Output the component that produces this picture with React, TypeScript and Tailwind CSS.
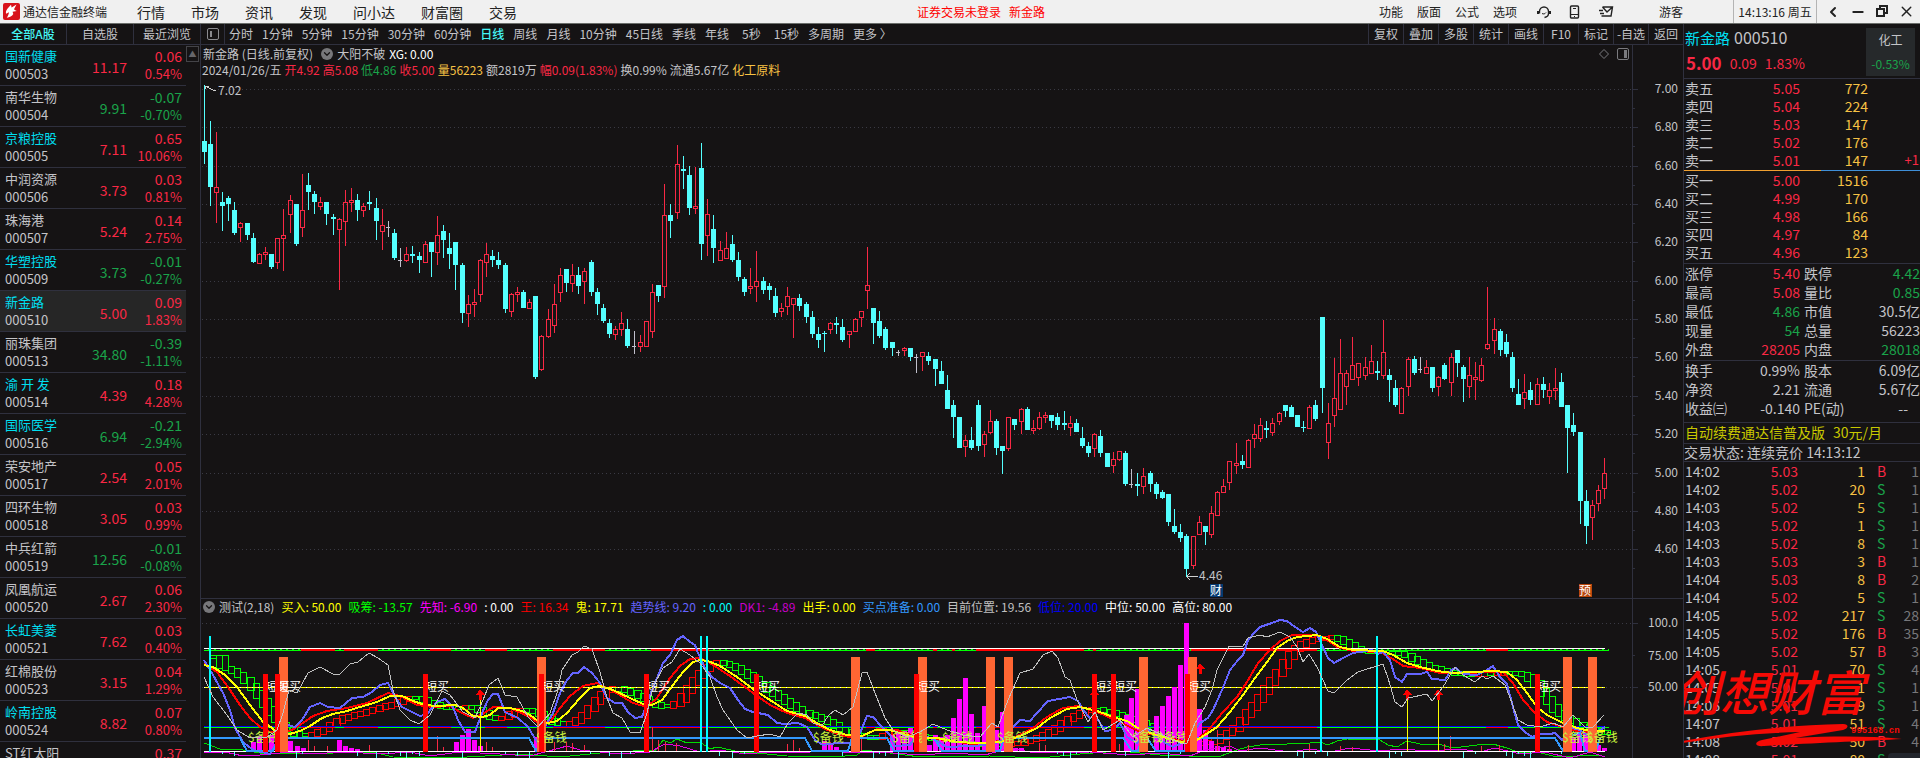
import React from "react";
import { ChevronDown, ChevronLeft, Copy, Headset, Minus, Smartphone, X } from "lucide-react";
import clsx from "clsx";

const UP = "text-[#f92844]";
const DOWN = "text-[#1aa34a]";
const GOLD = "text-[#f7c244]";
const CYAN = "text-[#00dff0]";

const menus = ["行情", "市场", "资讯", "发现", "问小达", "财富圈", "交易"];
const rightMenus = ["功能", "版面", "公式", "选项"];
const periods = [
  "分时", "1分钟", "5分钟", "15分钟", "30分钟", "60分钟", "日线", "周线", "月线",
  "10分钟", "45日线", "季线", "年线", "5秒", "15秒", "多周期", "更多 〉",
];
const tools = ["复权", "叠加", "多股", "统计", "画线", "F10", "标记", "-自选", "返回"];

type Stock = { name: string; code: string; price: string; diff: string; pct: string; hot?: boolean };

const stocks: Stock[] = [
  { name: "国新健康", code: "000503", price: "11.17", diff: "0.06", pct: "0.54%", hot: true },
  { name: "南华生物", code: "000504", price: "9.91", diff: "-0.07", pct: "-0.70%" },
  { name: "京粮控股", code: "000505", price: "7.11", diff: "0.65", pct: "10.06%", hot: true },
  { name: "中润资源", code: "000506", price: "3.73", diff: "0.03", pct: "0.81%" },
  { name: "珠海港", code: "000507", price: "5.24", diff: "0.14", pct: "2.75%" },
  { name: "华塑控股", code: "000509", price: "3.73", diff: "-0.01", pct: "-0.27%", hot: true },
  { name: "新金路", code: "000510", price: "5.00", diff: "0.09", pct: "1.83%", hot: true },
  { name: "丽珠集团", code: "000513", price: "34.80", diff: "-0.39", pct: "-1.11%" },
  { name: "渝 开 发", code: "000514", price: "4.39", diff: "0.18", pct: "4.28%", hot: true },
  { name: "国际医学", code: "000516", price: "6.94", diff: "-0.21", pct: "-2.94%", hot: true },
  { name: "荣安地产", code: "000517", price: "2.54", diff: "0.05", pct: "2.01%" },
  { name: "四环生物", code: "000518", price: "3.05", diff: "0.03", pct: "0.99%" },
  { name: "中兵红箭", code: "000519", price: "12.56", diff: "-0.01", pct: "-0.08%" },
  { name: "凤凰航运", code: "000520", price: "2.67", diff: "0.06", pct: "2.30%" },
  { name: "长虹美菱", code: "000521", price: "7.62", diff: "0.03", pct: "0.40%", hot: true },
  { name: "红棉股份", code: "000523", price: "3.15", diff: "0.04", pct: "1.29%" },
  { name: "岭南控股", code: "000524", price: "8.82", diff: "0.07", pct: "0.80%", hot: true },
  { name: "ST红太阳", code: "000525", price: "7.40", diff: "0.37", pct: "5.26%" },
];

const quoteLine: [string, string][] = [
  ["2024/01/26/五", "text-[#c4c4c8]"],
  ["开4.92", UP],
  ["高5.08", UP],
  ["低4.86", DOWN],
  ["收5.00", UP],
  ["量56223", GOLD],
  ["额2819万", "text-[#c4c4c8]"],
  ["幅0.09(1.83%)", UP],
  ["换0.99%", "text-[#c4c4c8]"],
  ["流通5.67亿", "text-[#c4c4c8]"],
  ["化工原料", GOLD],
];

const legend: [string, string][] = [
  ["测试(2,18)", "text-[#c4c4c8]"],
  ["买入: 50.00", "text-[#ffff00]"],
  ["吸筹: -13.57", "text-[#00ff00]"],
  ["先知: -6.90", "text-[#ff00ff]"],
  [": 0.00", "text-white"],
  ["王: 16.34", "text-[#ff0000]"],
  ["鬼: 17.71", "text-[#ffff00]"],
  ["趋势线: 9.20", "text-[#6464ff]"],
  [": 0.00", "text-[#00ffff]"],
  ["DK1: -4.89", "text-[#c800c8]"],
  ["出手: 0.00", "text-[#ffff00]"],
  ["买点准备: 0.00", "text-[#3399ff]"],
  ["目前位置: 19.56", "text-[#c0c0c0]"],
  ["低位: 20.00", "text-[#0000ff]"],
  ["中位: 50.00", "text-white"],
  ["高位: 80.00", "text-white"],
];

const sells = [["卖五", "5.05", "772"], ["卖四", "5.04", "224"], ["卖三", "5.03", "147"], ["卖二", "5.02", "176"], ["卖一", "5.01", "147", "+1"]];
const buys = [["买一", "5.00", "1516"], ["买二", "4.99", "170"], ["买三", "4.98", "166"], ["买四", "4.97", "84"], ["买五", "4.96", "123"]];

const W = "text-[#c4c4c8]";
const stats = [
  ["涨停", "5.40", UP, "跌停", "4.42", DOWN],
  ["最高", "5.08", UP, "量比", "0.85", DOWN],
  ["最低", "4.86", DOWN, "市值", "30.5亿", W],
  ["现量", "54", DOWN, "总量", "56223", W],
  ["外盘", "28205", UP, "内盘", "28018", DOWN],
];
const stats2 = [
  ["换手", "0.99%", W, "股本", "6.09亿", W],
  ["净资", "2.21", W, "流通", "5.67亿", W],
  ["收益㈢", "-0.140", W, "PE(动)", "--", W],
];

const ticks = [
  "14:02 5.03 1 B 1", "14:02 5.02 20 S 1", "14:03 5.02 5 S 1", "14:03 5.02 1 S 1",
  "14:03 5.02 8 S 1", "14:03 5.03 3 B 1", "14:04 5.03 8 B 2", "14:04 5.02 5 S 1",
  "14:05 5.02 217 S 28", "14:05 5.02 176 B 35", "14:05 5.02 57 B 3", "14:05 5.01 70 S 4",
  "14:05 5.01 1 S 1", "14:06 5.01 9 S 1", "14:07 5.01 51 S 4", "14:08 5.02 50 B 4",
  "14:08 5.01 80 S 2",
].map((t) => t.split(" "));

// kind, high, body top, body bottom, low
const candles = `d85,141,152,164 d121,144,187,206 u132,187,193,223 d192,202,206,231 d196,198,204,221 d202,210,233,235 u222,223,228,242
d223,223,235,240 d233,238,262,263 u253,254,264,264 u247,252,255,260 d254,254,267,269 u238,238,263,269 u209,235,239,271
u195,200,215,233 d204,204,244,246 u174,210,228,237 d173,185,192,210 d191,194,202,214 u197,202,207,210 d202,202,214,225
d214,217,219,235 u218,219,230,290 u190,202,222,246 u188,200,203,212 d194,200,210,221 u203,206,211,217 d191,202,204,210
d198,208,221,240 u209,225,232,250 n221,227,228,237 d229,233,258,260 n248,260,261,267 u247,254,261,262 d246,254,256,263
d252,256,260,273 u241,244,263,263 d242,242,252,277 u216,235,253,265 d225,231,240,258 d233,248,254,269 d242,242,265,290
d263,265,313,323 u295,304,314,327 u289,302,305,317 u259,260,295,302 u243,254,263,277 d250,256,260,267 d252,260,265,269
d263,265,309,313 u293,294,312,317 u287,292,295,302 d290,292,308,308 u299,302,309,309 d296,296,377,379 u335,336,370,371
u309,319,337,338 u284,304,326,333 u268,275,293,302 d269,269,283,292 u264,275,284,292 d267,275,286,294 u268,271,282,304
d260,262,292,296 d288,292,304,315 d304,308,321,323 d319,323,334,338 u326,329,335,340 u312,323,330,336 d319,329,346,348
n331,346,347,354 u335,342,347,352 u321,321,347,347 u284,292,332,338 d285,285,296,302 u184,215,287,298 d204,215,221,238
u145,164,213,219 d156,169,171,189 d166,175,208,215 u167,206,209,214 d143,168,244,260 u199,214,236,256 d215,229,248,263
u241,250,261,261 u232,248,259,259 d235,244,260,262 d252,260,277,281 d277,279,292,296 u268,286,289,294 u251,281,287,302
d277,281,290,294 d283,286,290,300 d288,296,313,317 u303,308,312,317 u287,296,307,315 u298,298,305,338 d294,298,306,311
d302,304,317,323 d311,317,334,338 d327,334,340,348 d331,333,334,352 u322,323,330,334 d317,323,325,334 d319,327,340,342
u331,331,335,348 u318,319,332,332 u311,311,318,327 u247,285,291,309 d308,308,323,344 d311,321,336,338 d327,329,348,350
d342,342,348,356 n350,352,353,356 u347,348,351,356 d348,348,357,361 n354,357,358,373 u352,352,357,371 d352,356,361,365
d359,359,369,386 d361,371,384,384 d375,390,409,409 d400,405,417,438 d417,417,448,448 u435,440,447,457 d427,440,448,450
d400,405,446,451 u431,434,445,457 u410,421,433,434 d419,421,448,455 d446,446,451,474 u417,417,449,451 d419,419,425,430
u408,409,422,434 d407,409,430,430 u420,428,431,434 u412,417,429,430 u412,415,418,423 d415,415,421,428 d413,417,425,430
d411,423,425,430 u416,423,428,436 d419,423,432,432 d427,438,446,448 d442,446,453,457 u433,434,449,457 d430,436,453,457
d453,453,467,467 u452,459,466,473 u451,451,460,461 d451,453,484,486 n469,484,485,488 d473,484,486,496 u468,476,487,494
d471,473,484,492 d482,484,494,499 d490,492,498,499 d494,494,522,526 d509,526,532,534 d524,532,538,542 d534,536,569,577
u536,536,566,569 u516,522,535,535 d526,526,532,545 u506,513,535,538 u491,492,516,516 u479,486,493,493 u461,461,483,490
u443,463,466,474 d455,461,465,469 u439,440,468,468 u424,434,439,448 u418,425,439,442 d421,428,430,438 u418,423,433,436
u412,413,422,425 d405,405,411,417 d405,407,417,417 d415,415,427,427 d421,427,428,432 u405,407,429,429 d400,405,419,421
d317,317,388,413 u403,423,443,459 u358,398,416,427 u339,373,410,410 u370,373,387,405 u337,365,380,380 u363,363,378,386
u357,367,376,380 u345,361,374,374 d361,371,373,380 u320,352,376,379 d369,375,380,402 d380,388,405,407 u387,388,414,414
u357,359,387,396 d356,359,373,375 n357,369,370,373 u360,367,374,374 d367,367,388,392 u376,377,387,396 d363,365,379,380
u353,357,383,396 d350,350,363,377 d365,367,379,402 u357,375,387,398 u362,377,380,400 u358,365,381,382 u287,344,349,350
u318,329,341,354 d329,331,350,356 d334,342,354,357 d352,357,388,392 d379,394,405,405 u374,392,399,409 d382,390,400,405
u378,384,405,405 d377,384,390,398 u383,390,397,404 u368,388,391,400 d373,382,407,407 d405,405,428,473 d413,425,432,436
d432,432,501,524 d490,501,526,544 u500,505,518,540 u485,490,504,511 u458,473,489,499`
  .split(/\s+/)
  .map((s, i) => {
    const [high, top, bottom, low] = s.slice(1).split(",").map(Number);
    return { kind: s[0], x: 204 + 6 * i + Math.floor(i / 7), high, top, bottom, low };
  });

const priceAxis: [string, number][] = [
  ["7.00", 89], ["6.80", 127], ["6.60", 166], ["6.40", 204], ["6.20", 242], ["6.00", 281], ["5.80", 319],
  ["5.60", 357], ["5.40", 396], ["5.20", 434], ["5.00", 473], ["4.80", 511], ["4.60", 549],
];

const yellowLine =
  "204,665 213,667 225,675 237,687 250,705 263,722 272,728 278,733 290,734 300,731 310,726 322,718 333,714 347,711 360,707 377,702 390,696 402,696 413,701 425,705 437,706 455,705 463,708 473,716 482,717 490,715 498,708 510,708 522,711 530,715 538,721 548,723 557,721 567,713 580,698 590,688 600,686 613,690 630,698 643,704 652,705 662,700 673,685 683,672 693,662 700,660 708,661 720,666 737,677 753,689 770,700 787,711 805,716 817,723 830,730 847,735 862,736 875,730 890,730 903,734 914,737 937,738 957,742 977,743 1000,742 1018,737 1037,728 1050,718 1067,709 1080,707 1097,711 1113,717 1127,721 1138,728 1153,734 1170,739 1180,742 1197,740 1205,735 1217,727 1230,712 1243,695 1255,678 1267,662 1277,648 1287,641 1297,637 1317,635 1327,639 1340,647 1353,650 1383,651 1393,655 1407,663 1420,667 1437,671 1453,673 1473,672 1493,671 1507,672 1517,680 1527,693 1537,707 1547,715 1563,723 1577,728 1590,731 1605,731";
const redLine =
  "204,664 217,672 230,690 240,705 250,718 260,727 270,732 280,733 292,730 300,725 313,716 327,711 347,708 367,703 388,693 400,696 417,705 433,707 450,706 460,712 473,718 483,714 493,707 510,708 530,717 538,723 550,722 560,708 570,696 583,686 597,683 613,691 633,703 647,707 657,698 670,678 680,666 690,659 700,658 710,663 730,676 753,693 770,705 787,713 805,718 823,728 840,735 850,737 863,736 877,729 897,730 917,737 937,739 973,744 1010,740 1033,728 1047,717 1063,708 1078,706 1097,712 1120,722 1140,732 1157,735 1187,742 1197,740 1210,728 1223,712 1237,697 1247,682 1258,663 1270,650 1280,641 1292,635 1313,635 1327,640 1337,647 1353,651 1380,652 1393,659 1403,666 1420,668 1440,673 1467,673 1487,672 1503,672 1513,683 1523,700 1535,713 1547,722 1563,727 1580,732 1605,731";
const trendLine =
  "204,660 213,675 223,693 230,710 235,728 243,742 253,750 270,754 280,737 288,725 295,727 302,720 310,707 320,703 328,707 340,708 352,698 363,697 372,692 380,685 388,683 395,697 402,707 412,712 420,716 427,714 437,702 445,699 453,707 458,720 465,732 475,732 482,713 488,700 493,694 498,694 505,712 518,718 528,727 537,742 543,730 553,713 560,693 567,680 573,673 578,673 584,667 592,673 600,683 607,698 615,703 622,703 628,712 635,718 642,717 648,700 655,683 663,663 670,655 677,640 683,636 690,642 695,645 698,653 705,668 712,677 720,683 730,688 738,700 745,709 753,712 768,715 777,723 785,724 798,723 807,727 815,740 823,745 837,743 850,743 860,733 867,716 873,717 882,727 890,735 895,746 910,745 918,733 935,740 947,747 990,745 1003,740 1010,730 1020,720 1030,721 1037,713 1048,701 1070,697 1078,701 1083,710 1090,718 1095,715 1105,731 1113,730 1120,723 1127,737 1137,743 1148,730 1160,740 1173,747 1188,740 1200,723 1208,718 1213,710 1222,690 1230,670 1238,660 1243,655 1248,640 1255,632 1260,627 1272,623 1280,620 1287,621 1295,627 1303,632 1310,628 1316,632 1322,645 1328,658 1334,663 1343,658 1353,653 1372,650 1378,654 1383,652 1390,660 1395,677 1402,682 1407,674 1420,674 1427,672 1432,679 1445,680 1451,670 1456,668 1463,674 1477,675 1487,670 1493,666 1500,677 1507,684 1513,707 1518,725 1525,732 1532,737 1540,734 1550,734 1555,733 1562,740 1572,728 1580,730 1590,737 1605,727";
const greyLine =
  "204,677 213,697 227,715 237,730 250,738 267,737 277,730 283,713 289,690 297,693 308,673 320,667 333,674 340,674 350,664 358,662 369,653 378,658 388,665 393,690 400,710 410,720 419,724 430,715 442,691 450,695 463,712 475,718 483,700 489,685 498,678 505,695 517,697 528,717 538,727 550,713 557,693 562,670 572,655 578,652 584,646 592,649 600,672 607,698 613,713 622,718 630,732 640,733 647,713 653,687 663,668 672,662 680,649 690,655 700,663 710,677 717,697 723,710 737,730 747,738 757,736 770,734 780,737 788,723 798,713 807,715 813,723 822,726 828,716 835,710 843,715 853,707 862,673 867,672 875,693 885,718 893,730 907,737 920,732 933,724 947,730 963,735 980,737 992,723 998,727 1008,700 1020,673 1033,669 1043,655 1052,651 1058,658 1065,677 1070,680 1077,700 1088,722 1095,712 1103,730 1120,720 1133,737 1147,728 1167,737 1180,743 1187,743 1195,723 1205,707 1212,690 1217,670 1229,646 1243,646 1248,638 1260,635 1267,637 1280,632 1290,637 1297,647 1303,662 1309,654 1317,667 1323,680 1328,691 1334,693 1347,680 1358,672 1383,664 1388,678 1395,702 1402,707 1408,698 1427,694 1432,701 1443,687 1455,667 1463,675 1475,682 1482,676 1487,679 1493,676 1505,685 1512,703 1518,720 1527,725 1540,727 1553,723 1563,727 1573,715 1585,727 1593,727 1604,715";
const readyLine =
  "204,738 240,738 247,751 273,751 280,738 529,738 536,751 543,738 805,738 812,751 848,751 852,738 887,738 894,751 914,751 920,738 934,738 942,751 1000,751 1004,738 1123,738 1132,751 1138,751 1142,738 1147,738 1156,751 1186,751 1192,738 1555,738 1563,751 1572,735 1580,733 1585,751 1596,751 1600,738";
const greenWave =
  "204,743 220,749 243,750 260,753 333,753 350,752 373,752 393,757 450,758 520,754 560,757 610,752 656,750 663,740 670,743 677,739 687,743 700,742 710,749 717,747 740,752 757,753 787,756 833,757 857,755 863,750 872,751 890,753 920,757 990,756 1040,758 1080,754 1120,751 1160,755 1218,757 1237,750 1247,747 1267,744 1287,744 1297,743 1310,743 1320,742 1328,745 1337,741 1347,739 1380,740 1388,745 1397,747 1407,741 1420,744 1438,744 1453,748 1477,745 1493,744 1507,748 1520,753 1537,752 1557,757 1600,755";
const purpleWave =
  "204,753 225,752 243,756 260,755 290,752 310,754 345,752 380,754 410,752 430,756 460,752 500,754 530,756 560,748 567,746 580,750 620,754 650,752 665,744 680,746 700,752 720,750 745,754 770,752 800,753 830,750 850,753 880,752 920,755 950,753 985,755 1010,748 1030,752 1050,753 1090,752 1130,755 1160,753 1190,756 1205,750 1230,746 1240,751 1260,748 1290,752 1310,749 1330,752 1350,748 1380,751 1400,749 1430,751 1460,749 1480,752 1495,748 1520,754 1545,752 1570,758 1590,752 1605,757";

const toPoints = (s: string) => s.split(" ").map((p) => p.split(",").map(Number));
const yellowPts = toPoints(yellowLine);

const valueAt = (x: number) => {
  const i = yellowPts.findIndex((p) => p[0] >= x);
  if (i <= 0) return i === 0 ? yellowPts[0][1] - 10 : yellowPts[yellowPts.length - 1][1];
  const [x0, y0] = yellowPts[i - 1];
  const [x1, y1] = yellowPts[i];
  return y0 + ((y1 - y0) * (x - x0)) / (x1 - x0);
};

// stair boxes trail behind the slow line
const stairs = candles.slice(1).map(({ x }, i) => {
  const a = Math.round(valueAt(x - 20));
  const b = Math.round(valueAt(x - 10));
  return { x, w: x - candles[i].x, y: Math.min(a, b), h: Math.abs(b - a) + 3, color: b >= a ? "#00ff00" : "#ff0000" };
});

const stripStops = [204, 301, 335, 344, 378, 430, 451, 485, 507, 553, 605, 651, 709, 866, 875, 933, 937, 952, 955, 976, 1084, 1093, 1096, 1191, 1317, 1486, 1508, 1609];
const redBars = [265, 277, 425, 541, 646, 756, 916, 1094, 1113, 1187, 1537];
const orangeBars = [279, 537, 851, 918, 986, 1004, 1139, 1188, 1563, 1588];
const cyanBars = [210, 701, 707, 1321, 1377];
const magentaBars: [number, number][] = [
  [253, 742], [259, 736], [271, 735], [290, 741], [297, 746], [303, 748], [339, 740], [345, 746], [351, 748], [357, 749],
  [456, 742], [462, 735], [468, 729], [474, 740], [480, 746], [536, 737], [824, 741], [830, 745], [836, 747], [892, 735],
  [898, 730], [904, 731], [910, 728], [929, 745], [935, 735], [941, 737], [947, 735], [953, 718], [959, 699], [965, 678],
  [971, 714], [977, 733], [984, 706], [996, 730], [1002, 712], [1015, 748], [1021, 748], [1126, 715], [1131, 698],
  [1137, 689], [1156, 716], [1162, 706], [1168, 696], [1174, 687], [1180, 665], [1186, 623], [1199, 709], [1205, 730],
  [1211, 741], [1217, 746], [1223, 747], [1229, 749], [1573, 737], [1579, 731], [1585, 733], [1598, 745], [1604, 748],
];
const spikes: [number, number][] = [
  [308, 740], [314, 746], [327, 746], [369, 745], [437, 736], [443, 747], [486, 742], [492, 747], [554, 742], [566, 742],
  [572, 743], [584, 745], [652, 727], [658, 740], [665, 742], [676, 743], [787, 744], [793, 740], [799, 748], [830, 742],
  [861, 738], [1039, 743], [1045, 745], [1119, 744], [1217, 730], [1229, 741], [1248, 745], [1309, 744], [1340, 746],
  [1352, 747], [1444, 744], [1450, 736], [1481, 746], [1499, 745],
];
const dips = [222, 234, 296, 302, 357, 376, 388, 400, 406, 412, 419, 462, 505, 517, 529, 590, 609, 621, 630, 719, 732, 744, 842, 873, 879, 885, 898, 1057, 1063, 1070, 1076, 1125, 1168, 1180, 1297, 1303, 1315, 1327, 1389, 1395, 1401, 1463, 1475, 1506, 1512, 1518, 1524, 1530, 1561];
const reserveMarks = [248, 536, 813, 892, 942, 997, 1132, 1157, 1562, 1587];
const arrows: [number, number][] = [[480, 689], [1094, 689], [1200, 663], [1407, 689], [1438, 689]];

const Disc = () => (
  <span className="flex size-3 items-center justify-center rounded-full bg-[#77777a] text-[#151314]">
    <ChevronDown size={10} strokeWidth={3} />
  </span>
);

const TopBar = () => (
  <header className="flex h-6 shrink-0 items-center border-b border-[#6a6d6a] bg-[#f0f0f0] text-[#222]">
    <svg width="17" height="17" viewBox="0 0 17 17" className="ml-[3px]">
      <rect width="17" height="17" rx="2" fill="#d8121a" />
      <path d="M13.5 1.5 8.6 4.4 8 1.8 4.6 5.6C3 7.500 2.600 9.300 3.100 10.800L6 9.200C5.500 11.600 5 13.100 3.800 14.800c2.900-.3 5.300-1.600 6.500-3.700L9.600 8.800l4.200-.8c-1.200-.6-2-1-2.800-1.700z" fill="#fff" />
    </svg>
    <h1 className="ml-[3px] text-xs">通达信金融终端</h1>
    <nav className="ml-[30px] flex gap-[26px] text-sm">
      {menus.map((m) => (
        <button key={m}>{m}</button>
      ))}
    </nav>
    <p className="mx-auto flex gap-2 pl-[66px] text-xs text-[#ff0000]">
      <span>证券交易未登录</span>
      <span>新金路</span>
    </p>
    <nav className="flex gap-[14px] text-xs">
      {rightMenus.map((m) => (
        <button key={m}>{m}</button>
      ))}
    </nav>
    <div className="ml-5 flex items-center gap-4">
      <button aria-label="客服">
        <svg width="14" height="14" viewBox="0 0 14 14" fill="none" stroke="currentColor">
          <path d="M2.500 8.500v-2a4.500 4.500 0 0 1 9 0v2c0 2-1.500 3.500-4 4" strokeWidth="1.400" />
          <path d="M1 6v3M13 6v3" strokeWidth="2" />
          <path d="M5 8.500c1.500.8 3 .5 4-1" />
        </svg>
      </button>
      <button aria-label="手机">
        <svg width="14" height="14" viewBox="0 0 14 14" fill="none" stroke="currentColor">
          <rect x="3.500" y="1" width="8" height="12" rx="1" strokeWidth="1.400" />
          <path d="M6 3.500h3M4 9.500h7M7 11.500h1" />
        </svg>
      </button>
      <button aria-label="邮件">
        <svg width="18" height="12" viewBox="0 0 16 12" fill="none" stroke="currentColor" strokeWidth="1.400">
          <path d="M4.500 1h10l-1.500 9H3.500M4.500 1l4.500 5 5.500-5M1 4.500h4M2 7.500h4" />
        </svg>
      </button>
    </div>
    <button className="ml-11 text-xs">游客</button>
    <time className="ml-[50px] flex h-full w-[84px] items-center justify-center border-x border-[#b4b4b4] text-xs">
      14:13:16 周五
    </time>
    <div className="flex items-center gap-[9px] pr-[5px] pl-2">
      <button aria-label="返回">
        <ChevronLeft size={16} strokeWidth={3} />
      </button>
      <button aria-label="最小化">
        <Minus size={16} strokeWidth={3} />
      </button>
      <button aria-label="还原">
        <svg width="14" height="13" viewBox="0 0 14 13" fill="none" stroke="currentColor" strokeWidth="2">
          <path d="M5 3V1h7v7h-2M2 4h7v7H2z" />
        </svg>
      </button>
      <button aria-label="关闭">
        <X size={17} strokeWidth={2} />
      </button>
    </div>
  </header>
);

const ToolBar = () => (
  <div className="flex h-[21px] shrink-0 items-center border-b border-[#2f303e] text-xs">
    <div className="flex h-full w-[201px] shrink-0 border-r border-[#2f303e]">
      <button className="w-[67px] border-r border-[#2f303e] font-medium text-[#45f5f5]">全部A股</button>
      <button className="w-[67px] border-r border-[#2f303e]">自选股</button>
      <button className="flex-1">最近浏览</button>
    </div>
    <button aria-label="侧栏" className="flex h-full w-6 shrink-0 items-center justify-center border-r border-[#2f303e]">
      <svg width="12" height="12" viewBox="0 0 12 12">
        <rect x="0.5" y="0.5" width="11" height="11" rx="1.5" fill="none" stroke="#8a8a8e" />
        <rect x="3" y="3" width="2" height="6" fill="#8a8a8e" />
      </svg>
    </button>
    <nav className="ml-1 flex gap-[9px] whitespace-nowrap">
      {periods.map((p) => (
        <button key={p} className={clsx(p === "日线" && "font-medium text-[#45f5f5]", p.endsWith("秒") && "pl-1")}>
          {p}
        </button>
      ))}
    </nav>
    <div className="ml-auto flex h-full">
      {tools.map((t) => (
        <button key={t} className="w-[35px] border-l border-[#2f303e]">
          {t}
        </button>
      ))}
    </div>
  </div>
);

const StockList = () => (
  <aside className="flex w-[200px] shrink-0 overflow-hidden">
    <ul className="w-[186px]">
      {stocks.map((s) => {
        const tone = s.diff.startsWith("-") ? DOWN : UP;
        return (
          <li
            key={s.code}
            className={clsx("flex h-[41px] border-b border-[#2f303e] pt-0.5 pr-1 pl-[5px]", s.code === "000510" && "bg-[#262626]")}
          >
            <div className="w-16 text-[13px] leading-[18px] whitespace-nowrap">
              <p className={s.hot ? CYAN : undefined}>{s.name}</p>
              <p>{s.code}</p>
            </div>
            <p className={clsx("flex-1 pt-[11px] text-right text-sm leading-[18px]", tone)}>{s.price}</p>
            <div className={clsx("w-[55px] text-right leading-[18px]", tone)}>
              <p className="text-sm leading-[18px]">{s.diff}</p>
              <p className="text-[13px] leading-[18px]">{s.pct}</p>
            </div>
          </li>
        );
      })}
    </ul>
    <button aria-label="向上" className="mt-px flex h-4 w-[13px] items-center justify-center border border-[#444448] text-[8px] text-[#66666a]">
      ▲
    </button>
  </aside>
);

const PriceChart = () => (
  <section className="flex min-h-0">
    <div className="flex min-w-0 flex-1 flex-col">
      <div className="h-8 shrink-0 text-xs">
        <div className="flex h-[17px] items-center gap-1 pl-[2px]">
          <h2 className="mr-1">新金路 (日线.前复权)</h2>
          <Disc />
          <span>大阳不破</span>
          <span className="text-white">XG: 0.00</span>
          <svg width="34" height="12" viewBox="0 0 34 12" fill="none" stroke="#7a7a7e" className="ml-auto">
            <path d="M6 1.5 10.5 6 6 10.5 1.5 6z" />
            <rect x="19.5" y="0.5" width="11" height="11" rx="1.5" />
            <path d="M27.5 2v8" strokeWidth="3" />
          </svg>
        </div>
        <p className="flex h-[15px] items-center gap-[3px] pl-px leading-[14px] whitespace-nowrap">
          {quoteLine.map(([text, tone]) => (
            <span key={text} className={tone}>
              {text}
            </span>
          ))}
        </p>
      </div>
      <svg className="min-h-0 w-full flex-1 text-xs" shapeRendering="crispEdges">
        {priceAxis.map(([label, y]) => (
          <line key={label} x1="1" x2="100%" y1={y - 76.5} y2={y - 76.5} stroke="#3a3a44" strokeDasharray="1 3" />
        ))}
        <g transform="translate(-201 -77)">
          {candles.map((c) => {
            const body = Math.max(c.bottom - c.top, 1);
            if (c.kind === "u")
              return (
                <g key={c.x} fill="#f92844">
                  <rect x={c.x} y={c.high} width="1" height={c.top - c.high} />
                  <rect x={c.x} y={c.bottom} width="1" height={c.low - c.bottom} />
                  <rect x={c.x - 1.5} y={c.top + 0.5} width="4" height={body - 1} fill="none" stroke="#f92844" />
                </g>
              );
            return (
              <g key={c.x} fill={c.kind === "d" ? "#54ffff" : "#c0c0cc"}>
                <rect x={c.x} y={c.high} width="1" height={c.low - c.high} />
                <rect x={c.x - 2} y={c.top} width={c.kind === "d" ? 5 : 4} height={body} />
              </g>
            );
          })}
          <g stroke="#d0d0d0" fill="none">
            <path d="M205 86.5h4M205 86l8 4 3 .5M205 86v3" />
            <path d="M1187 576.5h11M1187 576l3-3M1187 577l3 3" />
          </g>
          <g fill="#c4c4c8" shapeRendering="auto">
            <text x="218" y="95">7.02</text>
            <text x="1199" y="580">4.46</text>
          </g>
          <rect x="1210" y="584" width="13" height="13" fill="#053a72" />
          <rect x="1579" y="584" width="13" height="13" fill="#b9460c" />
          <g fill="#fff">
            <text x="1210" y="595">财</text>
            <text x="1579" y="595">预</text>
          </g>
        </g>
      </svg>
    </div>
    <svg className="h-full w-[51px] shrink-0 border-l border-[#2f303e] text-xs">
      {priceAxis.map(([label, y]) => (
        <g key={label} stroke="#2f303e">
          <path d={`M0 ${y - 44.5}h5M0 ${y - 25.5}h2`} />
          <text x="45" y={y - 41} textAnchor="end" fill="#c4c4c8" stroke="none">
            {label}
          </text>
        </g>
      ))}
    </svg>
  </section>
);

const IndicatorChart = () => (
  <section className="flex min-h-0 border-t border-[#2f303e]">
    <div className="flex min-w-0 flex-1 flex-col">
      <div className="flex h-4 shrink-0 items-center gap-1 pl-0.5 text-xs">
        <Disc />
        <p className="flex gap-[7px] whitespace-nowrap">
          {legend.map(([text, tone]) => (
            <span key={text + tone} className={tone}>
              {text}
            </span>
          ))}
        </p>
      </div>
      <svg className="min-h-0 w-full flex-1 text-xs" shapeRendering="crispEdges">
        <g transform="translate(-201 -615)" fill="none">
          <path d="M202 623.5H1632M202 687.5H1632" stroke="#3a3a44" strokeDasharray="1 3" />
          {stairs.map((s) => (
            <rect key={s.x} x={s.x + 0.5} y={s.y + 0.5} width={s.w} height={s.h} stroke={s.color} />
          ))}
          {stripStops.slice(1).map((end, i) => (
            <g key={end} stroke={i % 2 ? "#ff0000" : "#00ff00"}>
              <path d={`M${stripStops[i]} 650H${end}`} strokeWidth="2" />
              {i % 2 === 0 && <path d={`M${stripStops[i]} 649.5H${end}`} stroke="#151314" strokeDasharray="4 2" />}
              <path d={`M${stripStops[i]} 727.5H${end}`} />
            </g>
          ))}
          <path d="M204 648.5H1605" stroke="#fff" />
          <path d="M204 687.5H1605" stroke="#ffff00" />
          <path d="M204 687.5H1605" stroke="#fff" strokeDasharray="1 5" />
          <path d="M204 726.5H1605" stroke="#0000ff" />
          <g fill="#ff00ff">
            {magentaBars.map(([x, y]) => (
              <rect key={x} x={x - 2} y={y} width="5" height={751 - y} />
            ))}
          </g>
          <polyline points={greenWave} stroke="#00dc00" />
          <polyline points={purpleWave} stroke="#e600e6" />
          {spikes.map(([x, y]) => (
            <path key={x} d={`M${x + 0.5} ${y}V751`} stroke="#f92844" />
          ))}
          {dips.map((x, i) => (
            <path key={x} d={`M${x + 0.5} 751v${3 + (i % 3) * 2}`} stroke="#54ffff" />
          ))}
          <path d="M204 751.5H1605" stroke="#fff" />
          <polyline points={redLine} stroke="#ff0000" strokeWidth="2" />
          <polyline points={trendLine} stroke="#6464ff" strokeWidth="2" />
          <polyline points={readyLine} stroke="#3399ff" strokeWidth="2" />
          <polyline points={yellowLine} stroke="#ffff00" strokeWidth="2" />
          {[480, 1407, 1438].map((x) => (
            <path key={x} d={`M${x + 0.5} 695V751`} stroke="#ffff00" />
          ))}
          {arrows.map(([x, y]) => (
            <path key={x} d={`M${x} ${y}l5 6h-3v5h-3v-5h-3z`} fill="#ff0000" />
          ))}
          {orangeBars.map((x) => (
            <rect key={x} x={x} y="657" width="9" height="95" fill="#ff6633" />
          ))}
          <g fill="#c8f03c">
            {reserveMarks.map((x) => (
              <text key={x} x={x} y="742">$备钱</text>
            ))}
          </g>
          <g fill="#fff">
            {redBars.map((x) => (
              <text key={x} x={x} y="691">短买</text>
            ))}
          </g>
          {redBars.map((x) => (
            <rect key={x} x={x - 2} y="674" width="5" height="78" fill="#ff0000" />
          ))}
          {cyanBars.map((x) => (
            <rect key={x} x={x - 1} y="636" width="2" height="116" fill="#00ffff" />
          ))}
          <polyline points={greyLine} stroke="#c0c0c0" />
        </g>
      </svg>
    </div>
    <svg className="h-full w-[51px] shrink-0 border-l border-[#2f303e] text-xs">
      <path d="M0 24.5h5M0 56.5h2M0 88.5h5" stroke="#2f303e" />
      <g fill="#c4c4c8" textAnchor="end">
        <text x="45" y="28">100.0</text>
        <text x="45" y="61">75.00</text>
        <text x="45" y="92">50.00</text>
      </g>
    </svg>
  </section>
);

const OrderTable = ({ rows }: { rows: string[][] }) => (
  <table className="w-full table-fixed leading-[18px]">
    <tbody>
      {rows.map(([label, price, volume, delta]) => (
        <tr key={label}>
          <th className="w-12 pl-px text-left font-normal">{label}</th>
          <td className={clsx("w-[68px] text-right", UP)}>{price}</td>
          <td className={clsx("w-[68px] text-right", GOLD)}>{volume}</td>
          <td className={clsx("pr-px text-right text-[13px] leading-[18px]", UP)}>{delta}</td>
        </tr>
      ))}
    </tbody>
  </table>
);

const StatTable = ({ rows }: { rows: string[][] }) => (
  <table className="w-full table-fixed leading-[19px] whitespace-nowrap">
    <tbody>
      {rows.map(([a, av, at, b, bv, bt]) => (
        <tr key={a}>
          <th className="w-12 pl-px text-left font-normal">{a}</th>
          <td className={clsx("w-[68px] text-right", at)}>{av}</td>
          <th className="w-12 pl-1 text-left font-normal">{b}</th>
          <td className={clsx("text-right", bt, bv === "--" && "pr-3")}>{bv}</td>
        </tr>
      ))}
    </tbody>
  </table>
);

const Watermark = () => (
  <div className="pointer-events-none absolute right-0 bottom-0 h-[100px] w-60 text-[#f50a05]">
    <p className="-ml-2 text-[48px] leading-[64px] font-medium whitespace-nowrap italic">创想财富</p>
    <svg className="absolute top-[64px] left-0" width="230" height="30" fill="#f50a05">
      <path d="M3 19C55 9 110 3 163 2c7 0 5 5 0 6l-48 8c40-2 75-2 107 1-35 2-90 4-138 7-9 1-11-4-2-6l38-8C80 11 40 15 3 21z" />
    </svg>
    <span className="absolute top-[67px] left-[171px] font-['Liberation_Mono'] text-[9px] leading-3 font-bold">995168.cn</span>
  </div>
);

const QuotePanel = () => (
  <aside className="relative flex w-[237px] shrink-0 flex-col overflow-hidden border-l border-[#2f303e] text-sm">
    <div className="flex h-[55px] shrink-0 justify-between border-b border-[#2f303e] pt-1 pr-[5px] pl-px">
      <div>
        <h2 className="flex gap-1 leading-[19px]">
          <span className={clsx("text-[15px]", CYAN)}>新金路</span>
          <span className="text-base leading-[19px]">000510</span>
        </h2>
        <p className={clsx("flex items-center gap-2 pt-1 pl-px leading-6", UP)}>
          <b className="text-[17px]">5.00</b>
          <span>0.09</span>
          <span>1.83%</span>
        </p>
      </div>
      <div className="flex h-12 w-[49px] flex-col justify-between bg-[#26292b] py-0.5 text-center">
        <span className="text-xs leading-5">化工</span>
        <span className={clsx("text-xs leading-5", DOWN)}>-0.53%</span>
      </div>
    </div>
    <div className="pb-px">
      <OrderTable rows={sells} />
    </div>
    <div className="h-px w-full shrink-0 bg-[#3f8fd8]">
      <div className="h-px w-[58%] bg-[#f0a030]" />
    </div>
    <div className="border-b border-[#2f303e] pb-0.5">
      <OrderTable rows={buys} />
    </div>
    <div className="border-b border-[#2f303e] pb-px">
      <StatTable rows={stats} />
    </div>
    <div className="border-b border-[#2f303e] pb-1">
      <StatTable rows={stats2} />
    </div>
    <a href="#renew" className="flex h-[21px] shrink-0 items-center gap-2 border-b border-[#2f303e] pb-0.5 pl-px text-[#c8c800]">
      <span>自动续费通达信普及版</span>
      <span>30元/月</span>
    </a>
    <p className="flex h-[18px] shrink-0 items-center border-b border-[#2f303e] pb-px leading-[17px]">
      交易状态: 连续竞价 14:13:12
    </p>
    <table className="w-full shrink-0 table-fixed leading-[18px]">
      <tbody>
        {ticks.map(([time, price, volume, side, count], i) => (
          <tr key={i}>
            <td className="w-12 pl-px">{time}</td>
            <td className={clsx("w-[66px] text-right", UP)}>{price}</td>
            <td className={clsx("w-[67px] text-right", GOLD)}>{volume}</td>
            <td className={clsx("w-6 pl-3", side === "B" ? UP : DOWN)}>{side}</td>
            <td className="pr-px text-right text-[#77777a]">{count}</td>
          </tr>
        ))}
      </tbody>
    </table>
    <Watermark />
    <div className="absolute right-0 bottom-0 h-[5px] w-8 rounded-tl bg-[#22252c]" />
  </aside>
);

const App = () => {
  return (
    <div className="flex h-screen flex-col overflow-hidden bg-[#151314] font-['Noto_Sans_CJK_SC',sans-serif] text-[#c4c4c8]">
      <TopBar />
      <main className="flex min-h-0 flex-1">
        <div className="flex min-w-0 flex-1 flex-col">
          <ToolBar />
          <div className="flex min-h-0 flex-1">
            <StockList />
            <div className="grid min-w-0 flex-1 grid-cols-1 grid-rows-[minmax(0,1fr)_160px] border-l border-[#2f303e]">
              <PriceChart />
              <IndicatorChart />
            </div>
          </div>
        </div>
        <QuotePanel />
      </main>
    </div>
  );
};

export default App;
